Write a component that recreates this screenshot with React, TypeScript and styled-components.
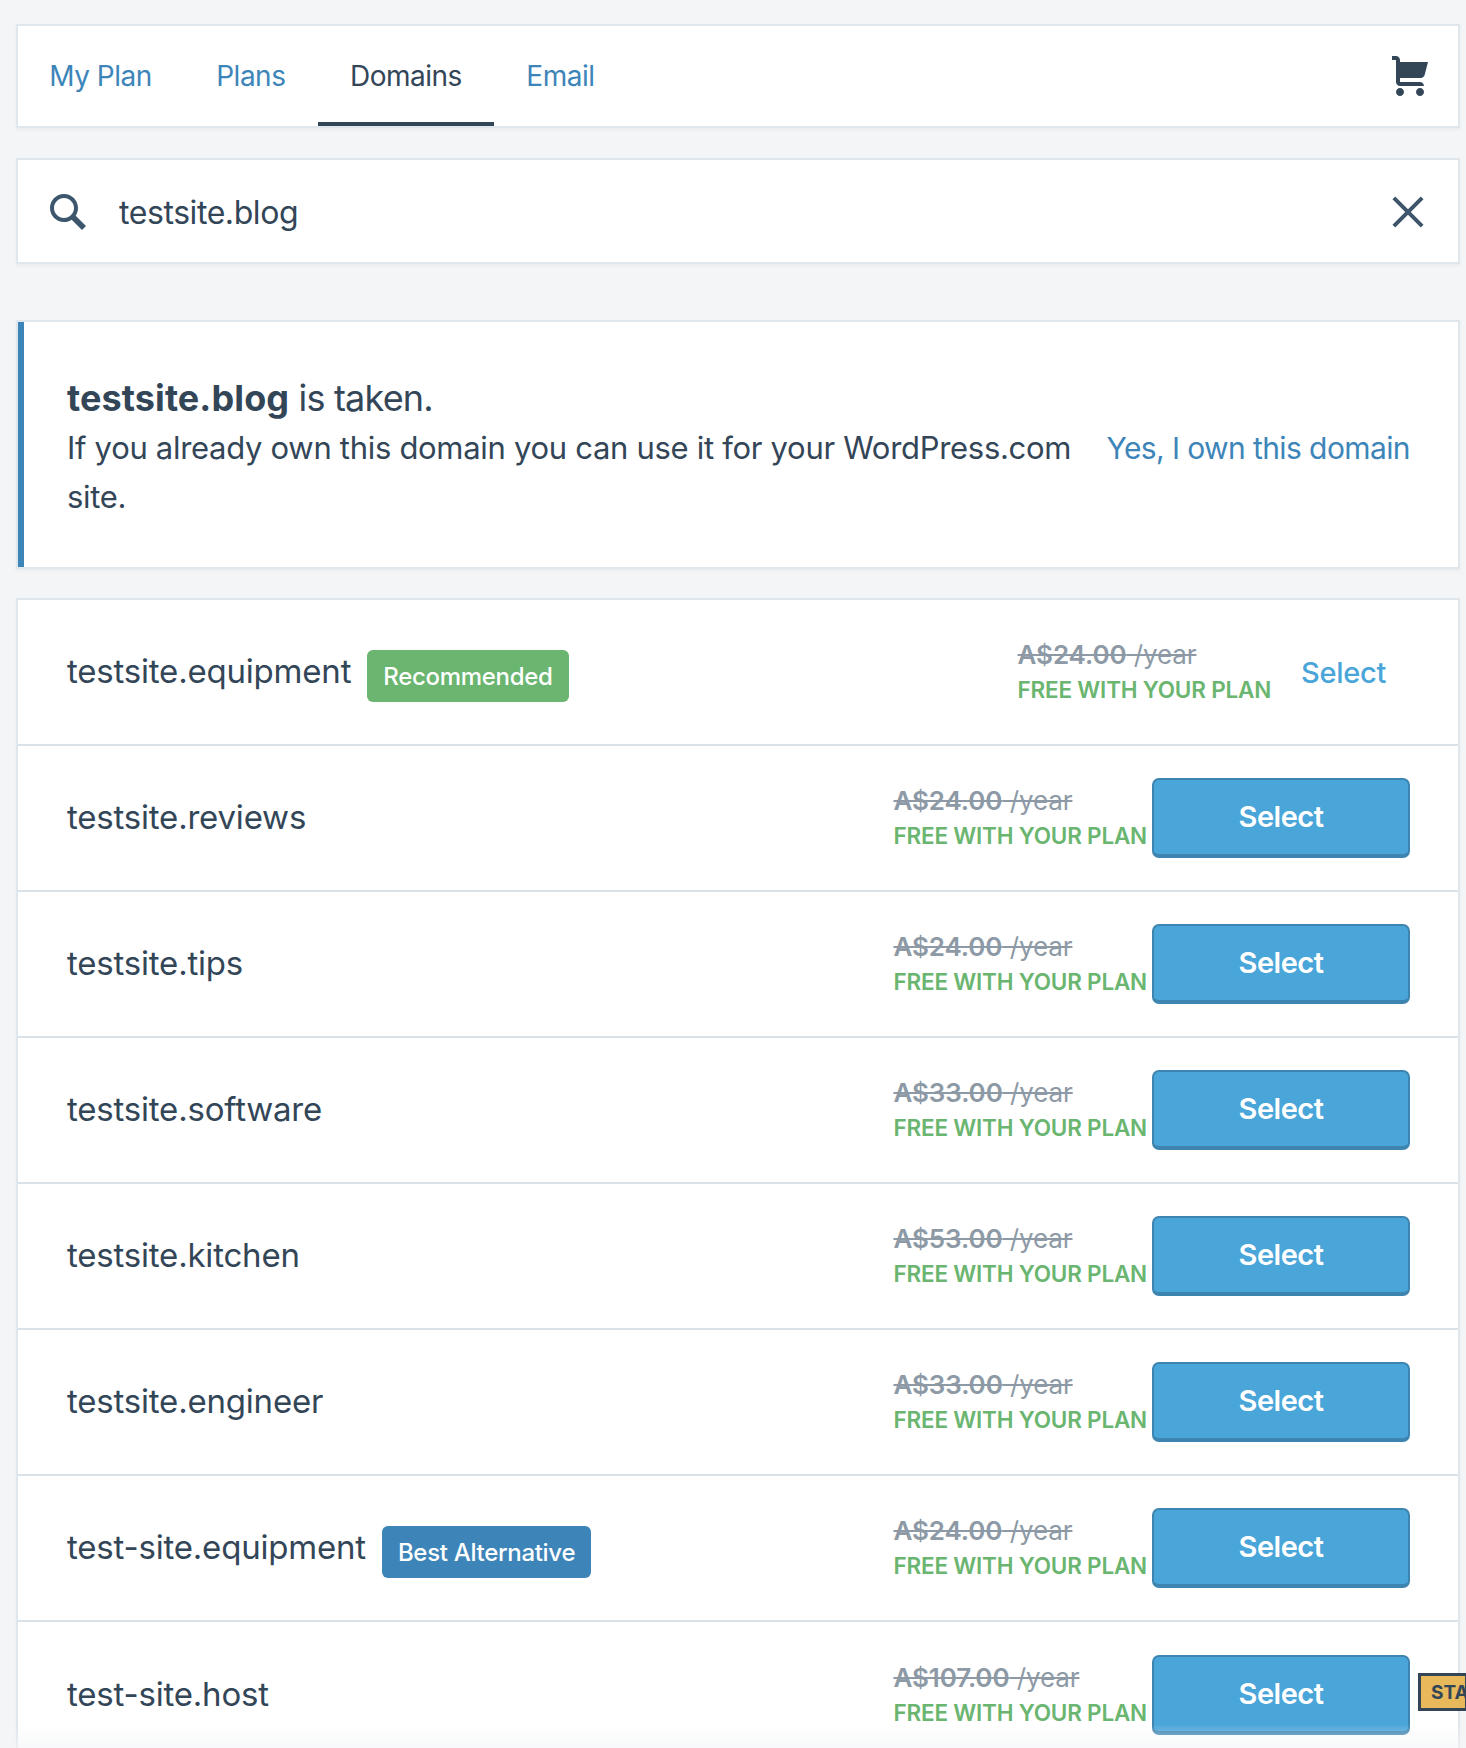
import React from "react";
import styled, { createGlobalStyle } from "styled-components";

const domains = [
  { id: 1, name: "testsite.equipment", price: "A$24.00", badge: "Recommended", compact: true },
  { id: 2, name: "testsite.reviews", price: "A$24.00" },
  { id: 3, name: "testsite.tips", price: "A$24.00" },
  { id: 4, name: "testsite.software", price: "A$33.00" },
  { id: 5, name: "testsite.kitchen", price: "A$53.00" },
  { id: 6, name: "testsite.engineer", price: "A$33.00" },
  { id: 7, name: "test-site.equipment", price: "A$24.00", badge: "Best Alternative", alt: true },
  { id: 8, name: "test-site.host", price: "A$107.00" },
];

const GlobalStyle = createGlobalStyle`
  html, body {
    margin: 0;
    height: 100%;
    overflow: hidden;
    background: #f3f5f6;
    font-family: Inter, "Noto Sans", sans-serif;
    color: #334658;
  }
`;

const Page = styled.div`
  position: relative;
  height: 1748px;
  overflow: hidden;
  box-sizing: border-box;
  padding: 24px 6px 0 16px;
  display: flex;
  flex-direction: column;
`;

const Card = styled.div`
  background: #fff;
  border: 2px solid #dfe6ec;
  box-shadow: 0 2px 2px rgba(223, 230, 236, 0.5);
  flex-shrink: 0;
`;

const NavCard = styled(Card)`
  height: 104px;
  box-sizing: border-box;
  display: flex;
  align-items: flex-start;
  justify-content: space-between;
  padding-right: 24px;
`;

const Tabs = styled.div`
  display: flex;
  margin-left: -1px;
`;

const Tab = styled.a<{ $active?: boolean }>`
  height: 100px;
  box-sizing: border-box;
  padding: 4px 32.25px 0;
  display: flex;
  align-items: center;
  font-size: 28px;
  letter-spacing: -0.5px;
  color: ${(p) => (p.$active ? "#334658" : "#3d85b9")};
  border-bottom: 4px solid ${(p) => (p.$active ? "#334658" : "transparent")};
`;

const CartIcon = styled.svg`
  width: 48px;
  height: 48px;
  margin-top: 26px;
  fill: #334658;
`;

const SearchCard = styled(Card)`
  margin-top: 30px;
  height: 106px;
  box-sizing: border-box;
  display: flex;
  align-items: center;
  padding: 2px 26px 0 26px;
`;

const SearchIcon = styled.svg`
  width: 48px;
  height: 48px;
  fill: #3d566b;
  flex-shrink: 0;
`;

const SearchText = styled.div`
  flex: 1;
  margin: 1px 0 0 27px;
  font-size: 32px;
  letter-spacing: -0.43px;
`;

const Notice = styled(Card)`
  margin-top: 56px;
  height: 249px;
  box-sizing: border-box;
  display: flex;
  align-items: center;
  padding: 0 48px 0 49px;
  box-shadow: inset 6px 0 0 #3d85b9, 0 2px 2px rgba(223, 230, 236, 0.5);
`;

const NoticeText = styled.div`
  width: 1030px;
  font-size: 31px;
  line-height: 49px;
  letter-spacing: -0.3px;
  margin-top: 5px;
`;

const Taken = styled.div`
  font-size: 36px;
  line-height: 50px;
  letter-spacing: -0.8px;
`;

const Bold = styled.strong`
  font-weight: 700;
  letter-spacing: 0.1px;
`;

const OwnLink = styled.a`
  margin-left: auto;
  font-size: 30px;
  letter-spacing: -0.6px;
  white-space: nowrap;
  color: #3d85b9;
  margin-top: 6px;
`;

const List = styled(Card)`
  margin-top: 29px;
`;

const Row = styled.div`
  position: relative;
  height: 146px;
  box-sizing: border-box;
  display: flex;
  align-items: center;
  padding: 0 48px 0 49px;
  border-bottom: 2px solid #d9e2e9;
  &:last-child {
    border-bottom: none;
  }
`;

const Name = styled.div`
  font-size: 33px;
  letter-spacing: -0.2px;
  white-space: nowrap;
  margin-top: -2px;
`;

const Badge = styled.span<{ $alt?: boolean }>`
  margin: 8px 0 0 16px;
  height: 52px;
  padding: 0 16px;
  display: inline-flex;
  align-items: center;
  border-radius: 6px;
  font-size: 24px;
  font-weight: 500;
  letter-spacing: -0.3px;
  color: #fff;
  background: ${(p) => (p.$alt ? "#3d85b9" : "#6ab56f")};
`;

const Price = styled.div`
  margin-left: auto;
  display: flex;
  flex-direction: column;
  gap: 5px;
  margin-top: 1px;
`;

const OldPrice = styled.div`
  font-size: 26px;
  line-height: 30px;
  letter-spacing: -0.1px;
  color: #8d9aa6;
  text-decoration: line-through;
  white-space: nowrap;
`;

const Amount = styled.span`
  font-weight: 600;
`;

const Free = styled.div`
  font-size: 22.5px;
  line-height: 30px;
  font-weight: 600;
  letter-spacing: -0.2px;
  color: #6ab56f;
  white-space: nowrap;
`;

const SelectButton = styled.button`
  margin-left: 5px;
  width: 258px;
  height: 80px;
  box-sizing: border-box;
  padding: 0 0 2px;
  background: #4aa5d9;
  border: 2px solid #3d85b0;
  border-bottom-width: 4px;
  border-radius: 7px;
  color: #fff;
  font-family: inherit;
  font-size: 29px;
  font-weight: 600;
  letter-spacing: -0.5px;
`;

const SelectLink = styled.a`
  margin: 0 0 0 30px;
  padding-right: 24px;
  color: #4aa5d9;
  font-size: 29px;
  font-weight: 500;
  letter-spacing: -0.3px;
`;

const EnvBadge = styled.div`
  position: absolute;
  right: -10px;
  top: 51px;
  width: 50px;
  height: 38px;
  box-sizing: border-box;
  padding-left: 10px;
  display: flex;
  align-items: center;
  background: #e8b95a;
  border: 3px solid #334658;
  font-size: 19px;
  font-weight: 700;
  overflow: hidden;
`;

const Fade = styled.div`
  position: absolute;
  left: 0;
  right: 0;
  bottom: 0;
  height: 24px;
  background: linear-gradient(rgba(243, 245, 246, 0), rgba(243, 245, 246, 0.6));
`;

export default function App() {
  return (
    <Page>
      <GlobalStyle />
      <NavCard>
        <Tabs>
          <Tab>My Plan</Tab>
          <Tab>Plans</Tab>
          <Tab $active>Domains</Tab>
          <Tab>Email</Tab>
        </Tabs>
        <CartIcon viewBox="0 0 24 24">
          <path d="M9 20c0 1.1-.9 2-2 2s-1.99-.9-1.99-2S5.9 18 7 18s2 .9 2 2zm8-2c-1.1 0-1.99.9-1.99 2s.89 2 1.99 2 2-.9 2-2-.9-2-2-2zm.396-5c.937 0 1.75-.65 1.952-1.566L21 5H7V4c0-1.105-.895-2-2-2H3v2h2v11c0 1.105.895 2 2 2h12c0-1.105-.895-2-2-2H7v-2h10.396z" />
        </CartIcon>
      </NavCard>

      <SearchCard>
        <SearchIcon viewBox="0 0 24 24">
          <path d="M21 19l-5.154-5.154C16.574 12.742 17 11.42 17 10c0-3.866-3.134-7-7-7s-7 3.134-7 7 3.134 7 7 7c1.42 0 2.742-.426 3.846-1.154L19 21l2-2zM5 10c0-2.757 2.243-5 5-5s5 2.243 5 5-2.243 5-5 5-5-2.243-5-5z" />
        </SearchIcon>
        <SearchText>testsite.blog</SearchText>
        <SearchIcon viewBox="0 0 24 24">
          <path d="M18.36 19.78L12 13.41l-6.36 6.37-1.42-1.42L10.59 12 4.22 5.64l1.42-1.42L12 10.59l6.36-6.36 1.41 1.41L13.41 12l6.36 6.36z" />
        </SearchIcon>
      </SearchCard>

      <Notice>
        <NoticeText>
          <Taken>
            <Bold>testsite.blog</Bold> is taken.
          </Taken>
          If you already own this domain you can use it for your WordPress.com site.
        </NoticeText>
        <OwnLink>Yes, I own this domain</OwnLink>
      </Notice>

      <List>
        {domains.map((domain) => (
          <Row key={domain.id}>
            <Name>{domain.name}</Name>
            {domain.badge && <Badge $alt={domain.alt}>{domain.badge}</Badge>}
            <Price>
              <OldPrice>
                <Amount>{domain.price}</Amount> /year
              </OldPrice>
              <Free>FREE WITH YOUR PLAN</Free>
            </Price>
            {domain.compact ? (
              <SelectLink>Select</SelectLink>
            ) : (
              <SelectButton>Select</SelectButton>
            )}
            {domain.id === 8 && <EnvBadge>STA</EnvBadge>}
          </Row>
        ))}
      </List>
      <Fade />
    </Page>
  );
}
